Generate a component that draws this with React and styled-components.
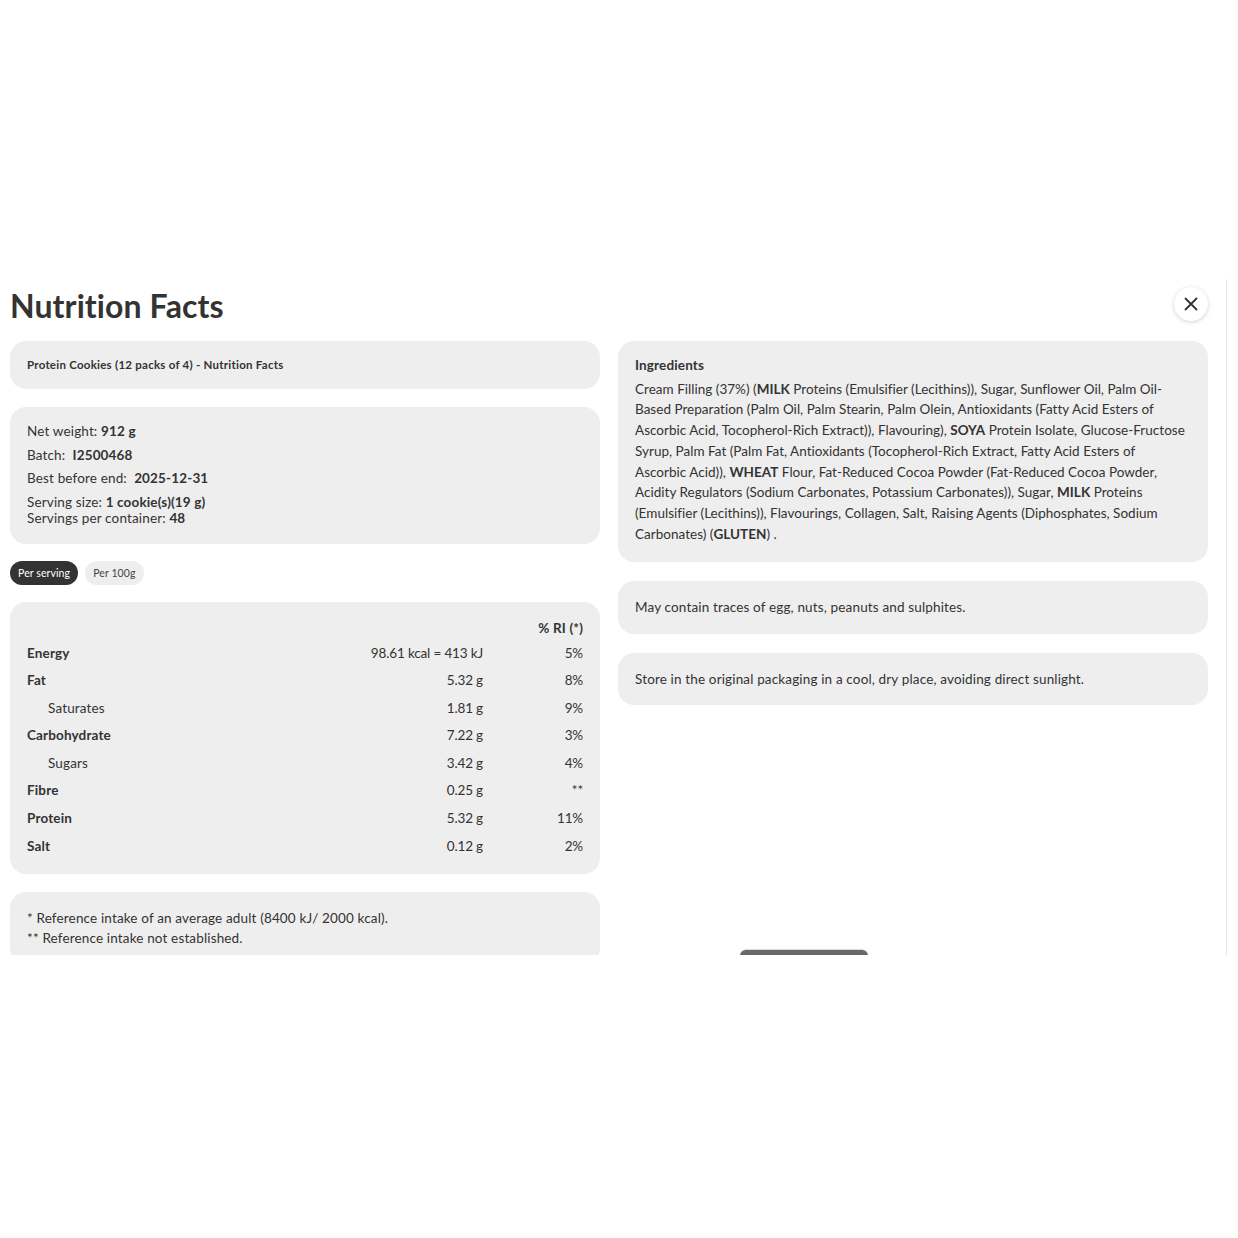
import React from "react";
import styled, { createGlobalStyle } from "styled-components";

const GlobalStyle = createGlobalStyle`
  html, body { margin: 0; padding: 0; background: #fff; }
  body { font-family: Lato, "Open Sans", Arial, sans-serif; color: #333; }
  * { box-sizing: border-box; }
`;

const Page = styled.div`
  width: 1238px;
  height: 1238px;
  padding-top: 279px;
  background: #fff;
`;

const Panel = styled.section`
  position: relative;
  width: 1227px;
  height: 676px;
  overflow: hidden;
  border-right: 1px solid #e6e6e6;
  padding: 0 17px 0 10px;
`;

const Header = styled.header`
  display: flex;
  align-items: flex-start;
  justify-content: space-between;
  height: 62px;
  padding-top: 8px;
`;

const Title = styled.h1`
  margin: 0;
  font-size: 32px;
  line-height: 38px;
  font-weight: 700;
  color: #333;
  letter-spacing: 0.1px;
`;

const CloseButton = styled.button`
  width: 34px;
  height: 34px;
  border-radius: 50%;
  border: none;
  background: #fff;
  box-shadow: 0 1px 4px rgba(0, 0, 0, 0.18);
  display: flex;
  align-items: center;
  justify-content: center;
  padding: 0;
  margin-right: 1px;
`;

const Columns = styled.div`
  display: grid;
  grid-template-columns: 590px 590px;
  column-gap: 18px;
  align-items: start;
`;

const Column = styled.div`
  display: flex;
  flex-direction: column;
  gap: ${(p) => p.$gap || 18}px;
`;

const Card = styled.div`
  background: #eeeeee;
  border-radius: 16px;
  padding: ${(p) => p.$pad || "16px 17px"};
  font-size: 13.5px;
  letter-spacing: 0.15px;
  line-height: 20.8px;
  color: #333;
`;

const ProductCard = styled(Card)`
  height: 48px;
  display: flex;
  align-items: center;
  padding: 0 17px;
  font-size: 11.5px;
  letter-spacing: 0.25px;
  font-weight: 700;
`;

const InfoLine = styled.p`
  margin: 0 0 7.5px;
  line-height: 16px;
  &:last-child { margin-bottom: 0; }
`;

const Tabs = styled.div`
  display: flex;
  gap: 7px;
  height: 24px;
  margin: -1px 0;
`;

const Tab = styled.button`
  height: 24px;
  border: none;
  border-radius: 12px;
  padding: 0 8px;
  font-family: inherit;
  font-size: 10.5px;
  letter-spacing: 0.1px;
  background: ${(p) => (p.$active ? "#333" : "#eeeeee")};
  color: ${(p) => (p.$active ? "#fff" : "#444")};
`;

const Table = styled.div`
  display: grid;
  grid-template-columns: 1fr auto 100px;
`;

const HeadCell = styled.div`
  grid-column: 3;
  height: 23px;
  line-height: 23px;
  text-align: right;
  font-weight: 700;
`;

const NameCell = styled.div`
  height: 27.6px;
  line-height: 27.6px;
  font-weight: ${(p) => (p.$sub ? 400 : 700)};
  padding-left: ${(p) => (p.$sub ? "21px" : "0")};
`;

const ValueCell = styled.div`
  height: 27.6px;
  line-height: 27.6px;
  text-align: right;
  letter-spacing: -0.15px;
`;

const SectionTitle = styled.h3`
  margin: 0 0 5.5px;
  font-size: 13.5px;
  line-height: 16px;
  font-weight: 700;
`;

const Text = styled.p`
  margin: 0;
  letter-spacing: ${(p) => (p.$tight ? "0.02px" : "inherit")};
`;

const FootLine = styled.p`
  margin: 0;
  line-height: 20px;
`;

const FloatingButton = styled.div`
  position: absolute;
  left: 740px;
  top: 671px;
  width: 128px;
  height: 40px;
  border-radius: 6px;
  background: #686868;
  box-shadow: 0 -1px 0 rgba(0, 0, 0, 0.15);
`;

const rows = [
  { name: "Energy", value: "98.61 kcal = 413 kJ", ri: "5%" },
  { name: "Fat", value: "5.32 g", ri: "8%" },
  { name: "Saturates", value: "1.81 g", ri: "9%", sub: true },
  { name: "Carbohydrate", value: "7.22 g", ri: "3%" },
  { name: "Sugars", value: "3.42 g", ri: "4%", sub: true },
  { name: "Fibre", value: "0.25 g", ri: "**" },
  { name: "Protein", value: "5.32 g", ri: "11%" },
  { name: "Salt", value: "0.12 g", ri: "2%" },
];

export default function App() {
  return (
    <Page>
      <GlobalStyle />
      <Panel>
        <Header>
          <Title>Nutrition Facts</Title>
          <CloseButton aria-label="Close">
            <svg width="16" height="16" viewBox="0 0 16 16" fill="none" stroke="#333" strokeWidth="1.8" strokeLinecap="round">
              <path d="M2.5 2.5 13.5 13.5M13.5 2.5 2.5 13.5" />
            </svg>
          </CloseButton>
        </Header>
        <Columns>
          <Column>
            <ProductCard>Protein Cookies (12 packs of 4) - Nutrition Facts</ProductCard>
            <Card $pad="16px 17px 18px">
              <InfoLine>Net weight: <b>912 g</b></InfoLine>
              <InfoLine>Batch:&nbsp; <b>I2500468</b></InfoLine>
              <InfoLine>Best before end:&nbsp; <b>2025-12-31</b></InfoLine>
              <InfoLine>
                Serving size: <b>1 cookie(s)(19 g)</b>
                <br />
                Servings per container: <b>48</b>
              </InfoLine>
            </Card>
            <Tabs>
              <Tab $active>Per serving</Tab>
              <Tab>Per 100g</Tab>
            </Tabs>
            <Card $pad="15px 17px 14px">
              <Table>
                <HeadCell>% RI (*)</HeadCell>
                {rows.map((r) => (
                  <React.Fragment key={r.name}>
                    <NameCell $sub={r.sub}>{r.name}</NameCell>
                    <ValueCell>{r.value}</ValueCell>
                    <ValueCell>{r.ri}</ValueCell>
                  </React.Fragment>
                ))}
              </Table>
            </Card>
            <Card $pad="16px 17px 16px">
              <FootLine>* Reference intake of an average adult (8400 kJ/ 2000 kcal).</FootLine>
              <FootLine>** Reference intake not established.</FootLine>
            </Card>
          </Column>
          <Column $gap={19}>
            <Card $pad="16px 17px 17px">
              <SectionTitle>Ingredients</SectionTitle>
              <Text $tight>
                Cream Filling (37%) (<b>MILK</b> Proteins (Emulsifier (Lecithins)), Sugar, Sunflower Oil, Palm Oil-Based Preparation (Palm Oil, Palm Stearin, Palm Olein, Antioxidants (Fatty Acid Esters of Ascorbic Acid, Tocopherol-Rich Extract)), Flavouring), <b>SOYA</b> Protein Isolate, Glucose-Fructose Syrup, Palm Fat (Palm Fat, Antioxidants (Tocopherol-Rich Extract, Fatty Acid Esters of Ascorbic&nbsp;Acid)), <b>WHEAT</b> Flour, Fat-Reduced Cocoa Powder (Fat-Reduced Cocoa Powder, Acidity Regulators (Sodium Carbonates, Potassium Carbonates)), Sugar, <b>MILK</b> Proteins (Emulsifier (Lecithins)), Flavourings, Collagen, Salt, Raising Agents (Diphosphates, Sodium Carbonates) (<b>GLUTEN</b>) .
              </Text>
            </Card>
            <Card>
              <Text>May contain traces of egg, nuts, peanuts and sulphites.</Text>
            </Card>
            <Card>
              <Text>Store in the original packaging in a cool, dry place, avoiding direct sunlight.</Text>
            </Card>
          </Column>
        </Columns>
        <FloatingButton />
      </Panel>
    </Page>
  );
}
